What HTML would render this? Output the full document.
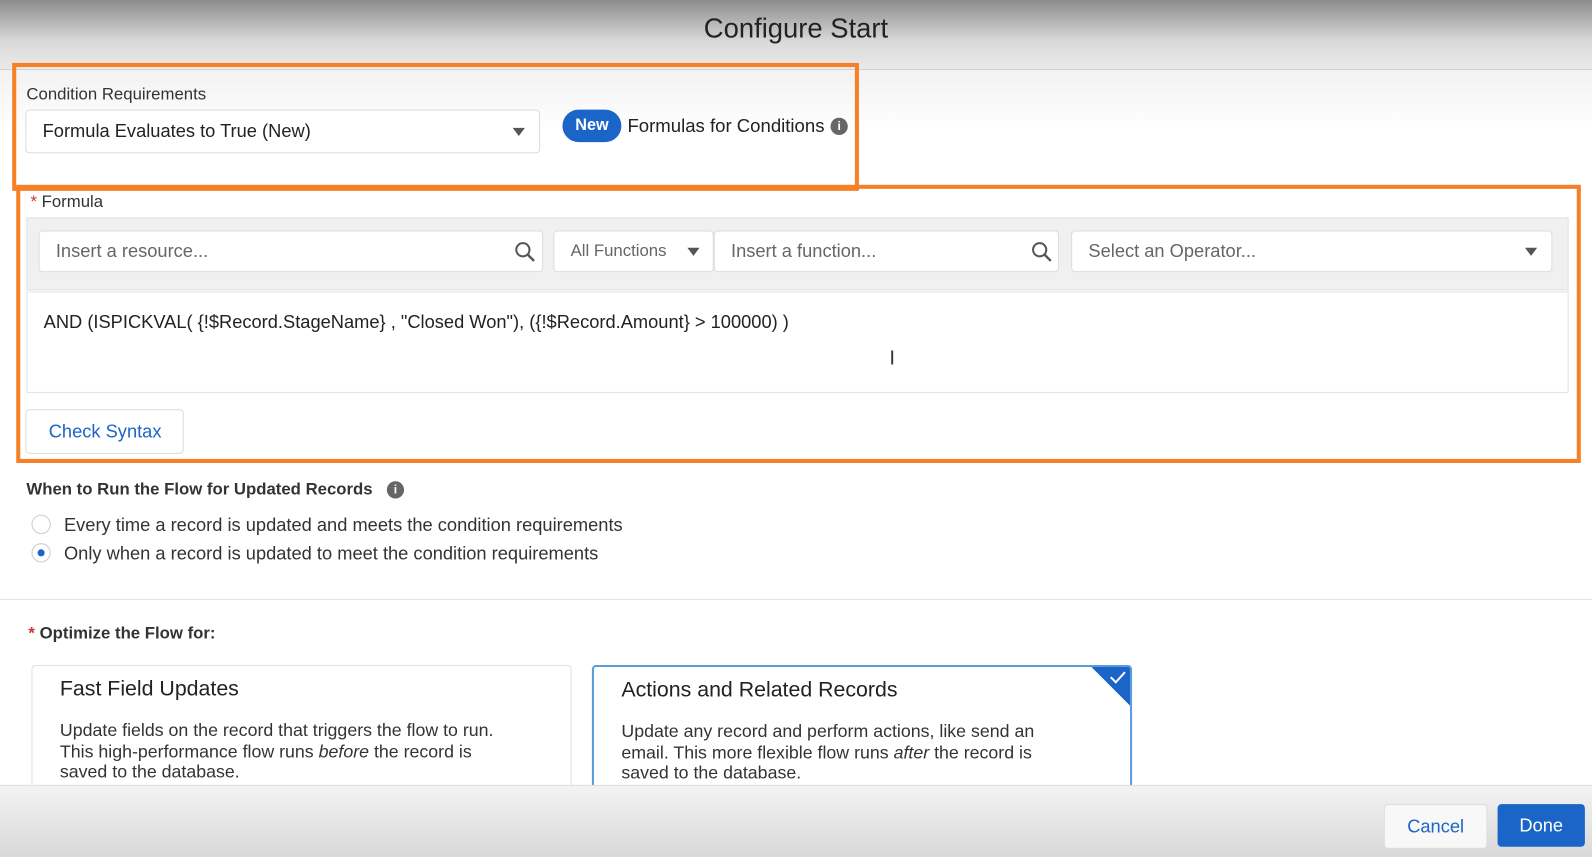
<!DOCTYPE html>
<html><head><style>
body{margin:0;width:1592px;height:852px;position:relative;overflow:hidden;background:#fff;font-family:"Liberation Sans",sans-serif;color:#222}
#w{position:absolute;left:0;top:0;width:1568px;height:840px;transform:scale(1.0153);transform-origin:0 0}
.a{position:absolute}
.hdr{left:0;top:0;width:1568px;height:68px;background:linear-gradient(#8c8c8c,#d9d9d9 60%,#eaeaea);border-bottom:1px solid #d0d0d0}
.box{border:4px solid #f58025;box-sizing:border-box}
.inp{background:#fff;border:1px solid #dcdcdc;border-radius:4px;box-sizing:border-box;font-size:18px;color:#666;padding-left:16px;display:flex;align-items:center;white-space:nowrap}
.tri{width:0;height:0;border-left:6px solid transparent;border-right:6px solid transparent;border-top:8px solid #555}
.card{border:1px solid #e0e0e0;border-radius:4px;box-sizing:border-box;background:#fff}
.card h3{margin:0;position:absolute;left:27px;top:11px;font-weight:normal;font-size:21px;color:#222;white-space:nowrap}
.card p{margin:0;position:absolute;left:27px;top:53px;font-size:17.5px;line-height:20.5px;color:#333;white-space:nowrap}
.t{white-space:nowrap}
</style></head><body><div id="w">
<div class="a hdr"></div>
<div class="a t" style="left:0;width:1568px;top:13px;text-align:center;font-size:27px;color:#222">Configure Start</div>
<div class="a" style="left:0;top:69px;width:1568px;height:60px;background:linear-gradient(#f2f2f2,#fff)"></div>

<div class="a box" style="left:12px;top:62px;width:834px;height:126px"></div>
<div class="a t" style="left:26px;top:84px;font-size:16.5px;color:#333">Condition Requirements</div>
<div class="a inp" style="left:25px;top:108px;width:507px;height:43px;color:#222;font-size:18px">Formula Evaluates to True (New)</div>
<div class="a tri" style="left:505px;top:126px"></div>
<div class="a" style="left:554px;top:108px;width:58px;height:32px;border-radius:16px;background:#1b64c8;color:#fff;font-weight:bold;font-size:16px;text-align:center;line-height:32px">New</div>
<div class="a t" style="left:618px;top:113px;font-size:18.3px;color:#222">Formulas for Conditions</div>
<div class="a" style="left:818px;top:116px;width:17px;height:17px;border-radius:50%;background:#666;color:#fff;font-size:12px;font-weight:bold;text-align:center;line-height:17px">i</div>

<div class="a box" style="left:16px;top:182px;width:1541px;height:274px"></div>
<div class="a t" style="left:30px;top:190px;font-size:16.5px;color:#333"><span style="color:#c23934">*</span> Formula</div>
<div class="a" style="left:26px;top:214px;width:1519px;height:72px;background:#f0f0f0;border:1px solid #e2e2e2;box-sizing:border-box"></div>
<div class="a inp" style="left:38px;top:227px;width:497px;height:41px">Insert a resource...</div>
<svg class="a" style="left:506px;top:237px" width="22" height="22" viewBox="0 0 22 22"><circle cx="9" cy="9" r="6.5" fill="none" stroke="#555" stroke-width="2"/><path d="M14 14l6 6" stroke="#555" stroke-width="2.4"/></svg>
<div class="a inp" style="left:545px;top:227px;width:158px;height:41px;font-size:16.5px">All Functions</div>
<div class="a tri" style="left:677px;top:244px"></div>
<div class="a inp" style="left:703px;top:227px;width:340px;height:41px">Insert a function...</div>
<svg class="a" style="left:1015px;top:237px" width="22" height="22" viewBox="0 0 22 22"><circle cx="9" cy="9" r="6.5" fill="none" stroke="#555" stroke-width="2"/><path d="M14 14l6 6" stroke="#555" stroke-width="2.4"/></svg>
<div class="a inp" style="left:1055px;top:227px;width:474px;height:41px">Select an Operator...</div>
<div class="a tri" style="left:1502px;top:244px"></div>
<div class="a" style="left:26px;top:287px;width:1519px;height:100px;background:#fff;border:1px solid #e2e2e2;box-sizing:border-box"></div>
<div class="a t" style="left:43px;top:307px;font-size:18px;color:#222">AND (ISPICKVAL( {!$Record.StageName} , "Closed Won"), ({!$Record.Amount} &gt; 100000) )</div>
<div class="a" style="left:876px;top:342px;font-size:20px;color:#333">I</div>
<div class="a inp" style="left:25px;top:403px;width:156px;height:44px;color:#1b64c8;font-size:18px;padding-left:22px">Check Syntax</div>

<div class="a t" style="left:26px;top:473px;font-size:16.5px;font-weight:bold;color:#333">When to Run the Flow for Updated Records</div>
<div class="a" style="left:381px;top:474px;width:17px;height:17px;border-radius:50%;background:#666;color:#fff;font-size:12px;font-weight:bold;text-align:center;line-height:17px">i</div>
<div class="a" style="left:31px;top:507px;width:19px;height:19px;border-radius:50%;border:1px solid #ccc;box-sizing:border-box"></div>
<div class="a t" style="left:63px;top:507px;font-size:18px;color:#333">Every time a record is updated and meets the condition requirements</div>
<div class="a" style="left:31px;top:535px;width:19px;height:19px;border-radius:50%;border:1px solid #ccc;box-sizing:border-box"></div>
<div class="a" style="left:37px;top:541px;width:7px;height:7px;border-radius:50%;background:#1b64c8"></div>
<div class="a t" style="left:63px;top:535px;font-size:18px;color:#333">Only when a record is updated to meet the condition requirements</div>
<div class="a" style="left:0;top:590px;width:1568px;height:1px;background:#e4e4e4"></div>
<div class="a t" style="left:28px;top:615px;font-size:16.5px;font-weight:bold;color:#333"><span style="color:#c23934">*</span> Optimize the Flow for:</div>

<div class="a card" style="left:31px;top:655px;width:532px;height:140px"><h3>Fast Field Updates</h3><p>Update fields on the record that triggers the flow to run.<br>This high-performance flow runs <i>before</i> the record is<br>saved to the database.</p></div>
<div class="a card" style="left:583px;top:655px;width:532px;height:140px;border:2px solid #5a9be0;overflow:hidden"><h3>Actions and Related Records</h3><p>Update any record and perform actions, like send an<br>email. This more flexible flow runs <i>after</i> the record is<br>saved to the database.</p>
<div class="a" style="right:0;top:0;width:0;height:0;border-top:38px solid #1b64c8;border-left:38px solid transparent"></div>
<svg class="a" style="right:3px;top:3px" width="18" height="14"><path d="M2 7l5 5 9-10" stroke="#fff" stroke-width="2" fill="none"/></svg></div>

<div class="a" style="left:0;top:773px;width:1568px;height:70px;background:linear-gradient(#f3f3f3,#d8d8d8);border-top:1px solid #ddd"></div>
<div class="a" style="left:1363px;top:792px;width:100px;height:42px;border:1px solid #ddd;border-radius:4px;background:#f8f8f8;color:#1b64c8;font-size:18px;text-align:center;line-height:42px">Cancel</div>
<div class="a" style="left:1475px;top:792px;width:86px;height:42px;border-radius:4px;background:#1b64c8;color:#fff;font-size:18px;text-align:center;line-height:42px">Done</div>
</div></body></html>
